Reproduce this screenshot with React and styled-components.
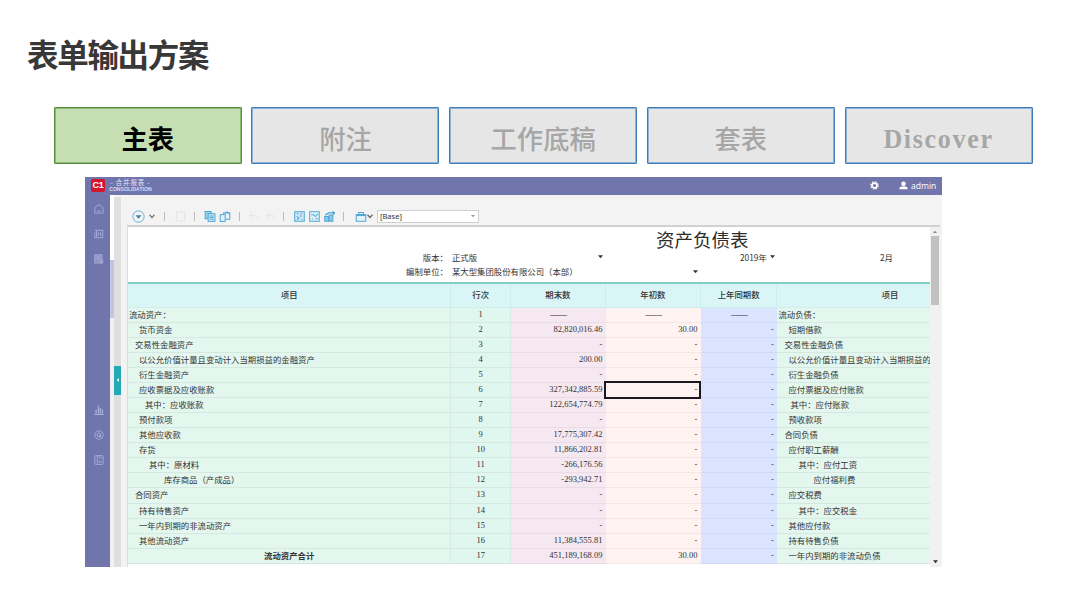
import React from 'react'
import styled, { createGlobalStyle } from 'styled-components'

const SANS = "'Noto Sans CJK SC', 'Noto Sans', sans-serif"

const GlobalStyle = createGlobalStyle`
  * {
    box-sizing: border-box;
  }
  body {
    margin: 0;
    background: #fff;
    font-family: ${SANS};
    overflow: hidden;
  }
`

const Slide = styled.main`
  width: 1080px;
  height: 608px;
  padding: 31px 0 0;
  background: #fff;
`
const Title = styled.h1`
  margin: 0 0 0 27px;
  height: 44px;
  font-size: 31.5px;
  font-weight: 700;
  letter-spacing: -1.3px;
  line-height: 44px;
  color: #383838;
`
const Tabs = styled.nav`
  display: flex;
  gap: 9.7px;
  margin: 32px 0 13px 53.8px;
`
const Tab = styled.div`
  display: flex;
  align-items: center;
  justify-content: center;
  width: 188px;
  height: 57px;
  padding-top: 6px;
  border: 1px solid ${p => (p.$active ? '#548b3c' : '#3d7cb6')};
  border-radius: 1px;
  box-shadow: inset 0 0 0 1px ${p => (p.$active ? '#8fb879' : '#8db4d6')};
  background: ${p => (p.$active ? '#c5dfb3' : '#e6e6e6')};
  color: ${p => (p.$active ? '#000' : '#a6a6a6')};
  font-size: 26.3px;
  font-weight: ${p => (p.$active ? 700 : 500)};
  line-height: 1;
`
const Latin = styled.span`
  font-family: 'Liberation Serif', serif;
  font-size: 26px;
  font-weight: 700;
  letter-spacing: 1.7px;
  transform: scaleY(1.08);
`

const Window = styled.section`
  width: 857px;
  height: 389.5px;
  margin-left: 85.4px;
  display: flex;
  flex-direction: column;
  overflow: hidden;
  background: #f3f3f3;
`
const TopBar = styled.header`
  display: flex;
  flex: none;
  height: 18px;
  padding: 0 6px 0 6px;
  background: #7076ab;
  color: #fff;
`
const Logo = styled.div`
  width: 13.5px;
  height: 13px;
  margin-top: 2px;
  border-radius: 2px;
  background: #d3142f;
  font: 700 9px/13px 'Liberation Sans', sans-serif;
  text-align: center;
`
const Brand = styled.div`
  margin: 1px 0 0 3px;
  width: 45px;
  text-align: center;
  white-space: nowrap;
`
const BrandName = styled.div`
  font-size: 6.5px;
  line-height: 8px;
  letter-spacing: 0.8px;
  color: #e2e4f4;
`
const BrandSub = styled.div`
  font: 700 5.1px/6px 'Liberation Sans', sans-serif;
  color: #d9dbf0;
`
const User = styled.div`
  display: flex;
  align-items: center;
  height: 17px;
  margin-left: auto;
  font: 8.6px/16px 'Open Sans', sans-serif;

  svg {
    margin-right: 3px;
  }
  svg:first-child {
    margin-right: 20px;
  }
`
const Body = styled.div`
  display: flex;
  flex: 1;
  min-height: 0;
`
const Side = styled.aside`
  width: 25px;
  padding: 9px 0 101.5px 2px;
  background: #7076ab;
  display: flex;
  flex-direction: column;
  justify-content: space-between;
  align-items: center;
  color: #a9aedd;
`
const SideGroup = styled.div`
  display: flex;
  flex-direction: column;
  gap: 15px;

  svg {
    display: block;
  }
`
const Track = styled.div`
  width: 4px;
  background: linear-gradient(#fff 65px, #c3c4e0 65px, #c3c4e0 123px, #f1f1f4 123px);
`
const Splitter = styled.div`
  width: 6.5px;
  padding-top: 170.5px;
  background: linear-gradient(#f3f3f3 2px, #dfdfdf 2px);
`
const Handle = styled.div`
  height: 29px;
  background: #25a9b9;
  display: flex;
  align-items: center;
  justify-content: center;
`
const Main = styled.div`
  flex: 1;
  min-width: 0;
  display: flex;
  flex-direction: column;
`
const Toolbar = styled.div`
  display: flex;
  flex: none;
  align-items: center;
  height: 30px;
  padding-top: 12px;
  color: #3d97c8;
`
const Tool = styled.div`
  flex: none;
  width: ${p => p.$w}px;
  margin-left: ${p => p.$ml}px;
  color: ${p => p.$color || '#4fa6d4'};

  svg {
    display: block;
    width: 100%;
    height: ${p => p.$h || 11}px;
  }
`
const Sep = styled.div`
  width: 1px;
  height: 9px;
  margin-left: ${p => p.$ml}px;
  background: #bcbcbc;
`
const Select = styled.div`
  display: flex;
  align-items: center;
  justify-content: space-between;
  width: 102px;
  height: 13px;
  margin-left: 4px;
  padding: 0 3px 0 1.5px;
  border: 1px solid #cfcfcf;
  background: #fff;
  color: #333;
  font: 7.6px/11px 'Noto Sans', sans-serif;
`
const Sheet = styled.div`
  display: flex;
  flex: 1;
  min-height: 0;
  margin: 0 2px 0 6px;
  border-top: 2px solid #d2d2d2;
  border-left: 1px solid #dcdcdc;
`
const Page = styled.div`
  width: 803px;
  overflow: hidden;
  background: #fff;
`
const Head = styled.div`
  height: 54.5px;
  font-size: 8.4px;
  line-height: 14.5px;
  color: #333;
`
const SheetTitle = styled.h2`
  margin: 0;
  padding: 1px 0 0 528px;
  height: 22.5px;
  font-size: 18.5px;
  font-weight: 400;
  line-height: 23px;
  color: #2c2c2c;
`
const Meta = styled.div`
  display: flex;
  white-space: nowrap;
`
const MetaLabel = styled.div`
  width: 320px;
  text-align: right;
`
const MetaValue = styled.div`
  display: flex;
  align-items: center;
  justify-content: space-between;
  width: ${p => p.$w}px;
  margin-left: ${p => p.$ml}px;
`
const Row = styled.div`
  display: grid;
  grid-template-columns: 323.5px 59.5px 95px 95px 76.5px 226px;
  grid-template-rows: 100%;
  height: ${p => (p.$head ? 26.2 : 15.07)}px;
  font-size: 8.38px;
  line-height: 13px;
  color: #333;
  white-space: nowrap;
  ${p => p.$head && 'border-top: 2px solid #7fd0c2;'}
`
const HeadCell = styled.div`
  background: #d9f5f5;
  border-right: 1px solid #cdeeee;
  border-bottom: 1px solid #cfeeec;
  text-align: center;
  line-height: 21px;
  font-weight: 500;
`
const Item = styled.div`
  padding-left: ${p => p.$indent}px;
  background: #e3f7ef;
  border-right: 1px solid #d6ebe3;
  border-bottom: 1px solid #d6e9e1;
  font-weight: ${p => (p.$total ? 700 : 400)};
  text-align: ${p => (p.$total ? 'center' : 'left')};
`
const No = styled.div`
  background: #e0f7ef;
  border-right: 1px solid #d6ebe3;
  border-bottom: 1px solid #d6e9e1;
  text-align: center;
  font-family: 'Liberation Serif', serif;
  font-size: 8.5px;
`
const tints = {
  end: ['#f5e8f1', '#e9dce6'],
  begin: ['#fff3f1', '#f3e6e5'],
  last: ['#dbe4ff', '#d0daf5']
}
const Amount = styled.div`
  padding-right: ${p => (p.$dash ? 0 : 3.5)}px;
  background: ${p => tints[p.$tint][0]};
  border-bottom: 1px solid ${p => tints[p.$tint][1]};
  text-align: ${p => (p.$dash ? 'center' : 'right')};
  font-family: 'Liberation Serif', serif;
  font-size: 8.5px;
  letter-spacing: ${p => (p.$dash ? '-0.4px' : '0')};
  ${p =>
    p.$selected &&
    `
    margin: -2px 0 -1px -2px;
    padding-right: 1.5px;
    border: 2px solid #1c1820;
    z-index: 1;
  `}
`
const Scroll = styled.div`
  flex: 1;
  padding: 0 1px 3px 1px;
  background: #f1f1f1;
  display: flex;
  flex-direction: column;
  align-items: center;
  justify-content: space-between;
`
const Thumb = styled.div`
  width: 8px;
  height: 69px;
  margin-top: 2px;
  background: #c1c1c1;
`
const ScrollTop = styled.div`
  display: flex;
  flex-direction: column;
  align-items: center;
  padding-top: 3px;
`

const Caret = ({ size = 5, dir = 'down', color = '#333' }) => (
  <svg width={size} height={size} viewBox='0 0 6 6' fill={color}>
    {dir === 'down' && <path d='M0 1.5h6L3 5z' />}
    {dir === 'up' && <path d='M0 4.5h6L3 1z' />}
    {dir === 'left' && <path d='M4.5 0v6L1 3z' />}
  </svg>
)

const Icon = ({ size = 10, children }) => (
  <svg
    width={size}
    height={size}
    viewBox='0 0 12 12'
    fill='none'
    stroke='currentColor'
    strokeWidth='1.1'
  >
    {children}
  </svg>
)

const icons = {
  down: (
    <Icon>
      <circle cx='6' cy='6' r='5.2' strokeWidth='0.8' />
      <path d='M3.2 4.8h5.6L6 8z' fill='#3585b5' stroke='none' />
    </Icon>
  ),
  chevron: (
    <Icon>
      <path d='M1 3.5L6 9l5-5.5' strokeWidth='2.4' />
    </Icon>
  ),
  blank: (
    <Icon>
      <rect x='1.5' y='1' width='9' height='10' />
    </Icon>
  ),
  copy: (
    <Icon>
      <path d='M4 8.5H.7v-8h6.5V3' fill='#9bd0ec' />
      <rect x='4' y='3' width='7.4' height='8.3' fill='#d4ecf7' />
      <path d='M5.5 5.4h4.5M5.5 7.2h4.5M5.5 9h4.5' />
    </Icon>
  ),
  paste: (
    <Icon>
      <rect x='.8' y='4' width='5.4' height='7.4' fill='#e4f3fb' />
      <path d='M4.5 3.5V2h2M9 2h2.2v7H6.5' />
      <path d='M6 3.4L8 .8l2 2.6' />
    </Icon>
  ),
  undo: (
    <Icon>
      <path d='M4 2L1 5l3 3M1 5h7l3 3' />
    </Icon>
  ),
  gridIn: (
    <Icon>
      <rect x='.8' y='.8' width='10.4' height='10.4' fill='#d4ecf9' />
      <path d='M3 3h2M7 3h2M3 5.5l3 3M6 5.5h3M3 9h2M8 9h1.5' />
    </Icon>
  ),
  gridOut: (
    <Icon>
      <rect x='.8' y='.8' width='10.4' height='10.4' fill='#e3f3fb' />
      <path d='M2.5 4.2h3M5 4l2 2 3-3M3 8.8h1.5M7 8.5h3' />
    </Icon>
  ),
  chart: (
    <Icon>
      <rect x='.8' y='6' width='4' height='5.2' fill='#8ccbed' />
      <rect x='5.6' y='4.4' width='4' height='6.8' fill='#8ccbed' />
      <path d='M1.5 4.5L5 2h6M9 .6L11.4 2 9.8 4.2' strokeWidth='1.5' />
    </Icon>
  ),
  briefcase: (
    <Icon>
      <path d='M3.5 4V1.6h5V4' />
      <rect x='.8' y='4' width='10.4' height='7.2' fill='#e3f3fb' />
      <path d='M.8 4.6h10.4' strokeWidth='1.8' />
    </Icon>
  ),
  home: (
    <Icon>
      <path d='M1 5.6C2 3 4 1.2 6 1.2S10 3 11 5.6V11H1z' />
      <path d='M3.5 8.5h5' />
    </Icon>
  ),
  book: (
    <Icon>
      <path d='M1 1.5h10M3 1.5v9h7.5v-9M1 4v6.5h2M5.5 4v4.5M8 4v4.5' />
    </Icon>
  ),
  doc: (
    <Icon>
      <rect x='1' y='1' width='8.5' height='9.8' fill='currentColor' fillOpacity='.5' />
      <path d='M3 3.5h4.5M3 6h4.5M7 9l2-2.5L11.5 9 9 11.3z' />
    </Icon>
  ),
  bars: (
    <Icon>
      <path d='M.5 11.3h11M2.5 10V5.5M5.3 10V1M7.5 10V3.5M10 10V5' strokeWidth='1.5' />
    </Icon>
  ),
  target: (
    <Icon>
      <circle cx='6' cy='6' r='5' />
      <circle cx='6' cy='6' r='2.2' />
      <path d='M6 6l3.5 3.5' />
    </Icon>
  ),
  report: (
    <Icon>
      <rect x='1' y='.8' width='10' height='10.4' rx='1' />
      <path d='M4 1v9M6.3 9.5V6M8.7 9.5V7M7 1v2.5h2.5' />
    </Icon>
  ),
  gear: (
    <Icon size={9}>
      <circle cx='6' cy='6' r='3.3' strokeWidth='2.3' />
      <circle cx='6' cy='6' r='4.9' strokeWidth='1.6' strokeDasharray='2 1.85' />
    </Icon>
  ),
  person: (
    <Icon size={9}>
      <circle cx='6' cy='3.6' r='3' fill='currentColor' stroke='none' />
      <path d='M.7 11V9.5C.7 7.6 3 7.2 6 7.2s5.3.4 5.3 2.3V11z' fill='currentColor' stroke='none' />
    </Icon>
  )
}

// [left item, left indent, end amount, begin amount, right item, right indent]
const rows = [
  ['流动资产：', 1, '——', '——', '流动负债：', 1],
  ['货币资金', 11, '82,820,016.46', '30.00', '短期借款', 11],
  ['交易性金融资产', 7, '-', '-', '交易性金融负债', 7],
  ['以公允价值计量且变动计入当期损益的金融资产', 11, '200.00', '-', '以公允价值计量且变动计入当期损益的', 11],
  ['衍生金融资产', 11, '-', '-', '衍生金融负债', 11],
  ['应收票据及应收账款', 11, '327,342,885.59', '-', '应付票据及应付账款', 11],
  ['其中：应收账款', 17, '122,654,774.79', '-', '其中：应付账款', 13],
  ['预付款项', 11, '-', '-', '预收款项', 11],
  ['其他应收款', 11, '17,775,307.42', '-', '合同负债', 7],
  ['存货', 11, '11,866,202.81', '-', '应付职工薪酬', 11],
  ['其中：原材料', 21, '-266,176.56', '-', '其中：应付工资', 21],
  ['库存商品（产成品）', 36, '-293,942.71', '-', '应付福利费', 36],
  ['合同资产', 7, '-', '-', '应交税费', 11],
  ['持有待售资产', 11, '-', '-', '其中：应交税金', 21],
  ['一年内到期的非流动资产', 11, '-', '-', '其他应付款', 11],
  ['其他流动资产', 11, '11,384,555.81', '-', '持有待售负债', 11],
  ['流动资产合计', 0, '451,189,168.09', '30.00', '一年内到期的非流动负债', 11]
]

const SELECTED_ROW = 5

const BalanceTable = () => (
  <>
    <Row $head>
      {['项目', '行次', '期末数', '年初数', '上年同期数', '项目'].map((name, i) => (
        <HeadCell key={i}>{name}</HeadCell>
      ))}
    </Row>
    {rows.map(([left, indent, end, begin, right, rightIndent], i) => (
      <Row key={i}>
        <Item $indent={indent} $total={i === rows.length - 1}>{left}</Item>
        <No>{i + 1}</No>
        <Amount $tint='end' $dash={i === 0}>{end}</Amount>
        <Amount $tint='begin' $dash={i === 0} $selected={i === SELECTED_ROW}>{begin}</Amount>
        <Amount $tint='last' $dash={i === 0}>{i === 0 ? '——' : '-'}</Amount>
        <Item $indent={rightIndent}>{right}</Item>
      </Row>
    ))}
  </>
)

const tabs = ['主表', '附注', '工作底稿', '套表', 'Discover']

export default function App () {
  return (
    <Slide>
      <GlobalStyle />
      <Title>表单输出方案</Title>
      <Tabs>
        {tabs.map((tab, i) => (
          <Tab key={tab} $active={i === 0}>
            {tab === 'Discover' ? <Latin>{tab}</Latin> : tab}
          </Tab>
        ))}
      </Tabs>
      <Window>
        <TopBar>
          <Logo>C1</Logo>
          <Brand>
            <BrandName>- 合并报表 -</BrandName>
            <BrandSub>CONSOLIDATION</BrandSub>
          </Brand>
          <User>
            {icons.gear}
            {icons.person}
            admin
          </User>
        </TopBar>
        <Body>
          <Side>
            <SideGroup>
              {icons.home}
              {icons.book}
              {icons.doc}
            </SideGroup>
            <SideGroup>
              {icons.bars}
              {icons.target}
              {icons.report}
            </SideGroup>
          </Side>
          <Track />
          <Splitter>
            <Handle>
              <Caret dir='left' size={4} color='#fff' />
            </Handle>
          </Splitter>
          <Main>
            <Toolbar>
              <Tool $ml={11} $w={13} $h={13}>{icons.down}</Tool>
              <Tool $ml={4} $w={6} $h={6} $color='#777'>{icons.chevron}</Tool>
              <Sep $ml={9.5} />
              <Tool $ml={9.5} $w={11} $color='#e2e4e6'>{icons.blank}</Tool>
              <Sep $ml={8} />
              <Tool $ml={9} $w={12}>{icons.copy}</Tool>
              <Tool $ml={3.5} $w={12}>{icons.paste}</Tool>
              <Sep $ml={7.5} />
              <Tool $ml={8} $w={12} $color='#e2e7ea'>{icons.undo}</Tool>
              <Tool $ml={5} $w={12} $color='#e2e7ea'>{icons.undo}</Tool>
              <Sep $ml={6.5} />
              <Tool $ml={9.5} $w={11}>{icons.gridIn}</Tool>
              <Tool $ml={4} $w={11}>{icons.gridOut}</Tool>
              <Tool $ml={4} $w={11}>{icons.chart}</Tool>
              <Sep $ml={8} />
              <Tool $ml={11.5} $w={12}>{icons.briefcase}</Tool>
              <Tool $ml={0} $w={6} $h={6} $color='#666'>{icons.chevron}</Tool>
              <Select>
                [Base]
                <Caret size={4} color='#999' />
              </Select>
            </Toolbar>
            <Sheet>
              <Page>
                <Head>
                  <SheetTitle>资产负债表</SheetTitle>
                  <Meta>
                    <MetaLabel>版本：</MetaLabel>
                    <MetaValue $ml={4} $w={151}>
                      正式版
                      <Caret />
                    </MetaValue>
                    <MetaValue $ml={137} $w={35}>
                      2019年
                      <Caret />
                    </MetaValue>
                    <MetaValue $ml={105} $w={20}>2月</MetaValue>
                  </Meta>
                  <Meta>
                    <MetaLabel>编制单位：</MetaLabel>
                    <MetaValue $ml={4} $w={246}>
                      某大型集团股份有限公司（本部）
                      <Caret />
                    </MetaValue>
                  </Meta>
                </Head>
                <BalanceTable />
              </Page>
              <Scroll>
                <ScrollTop>
                  <Caret dir='up' size={4} color='#888' />
                  <Thumb />
                </ScrollTop>
                <Caret size={5} />
              </Scroll>
            </Sheet>
          </Main>
        </Body>
      </Window>
    </Slide>
  )
}
